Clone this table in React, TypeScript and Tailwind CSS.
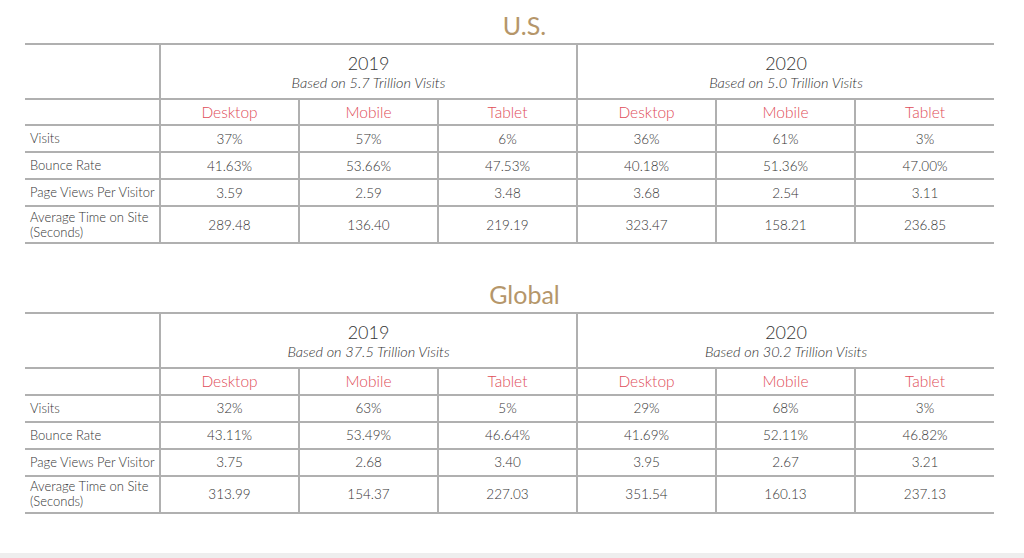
import React from "react"

interface Period {
  year: string
  basis: string
  values: string[][] // rows x [desktop, mobile, tablet]
}

interface Region {
  title: string
  periods: Period[]
}

const rowLabels = ["Visits", "Bounce Rate", "Page Views Per Visitor", "Average Time on Site\n(Seconds)"]
const devices = ["Desktop", "Mobile", "Tablet"]

const regions: Region[] = [
  {
    title: "U.S.",
    periods: [
      {
        year: "2019",
        basis: "Based on 5.7 Trillion Visits",
        values: [
          ["37%", "57%", "6%"],
          ["41.63%", "53.66%", "47.53%"],
          ["3.59", "2.59", "3.48"],
          ["289.48", "136.40", "219.19"],
        ],
      },
      {
        year: "2020",
        basis: "Based on 5.0 Trillion Visits",
        values: [
          ["36%", "61%", "3%"],
          ["40.18%", "51.36%", "47.00%"],
          ["3.68", "2.54", "3.11"],
          ["323.47", "158.21", "236.85"],
        ],
      },
    ],
  },
  {
    title: "Global",
    periods: [
      {
        year: "2019",
        basis: "Based on 37.5 Trillion Visits",
        values: [
          ["32%", "63%", "5%"],
          ["43.11%", "53.49%", "46.64%"],
          ["3.75", "2.68", "3.40"],
          ["313.99", "154.37", "227.03"],
        ],
      },
      {
        year: "2020",
        basis: "Based on 30.2 Trillion Visits",
        values: [
          ["29%", "68%", "3%"],
          ["41.69%", "52.11%", "46.82%"],
          ["3.95", "2.67", "3.21"],
          ["351.54", "160.13", "237.13"],
        ],
      },
    ],
  },
]

function StatsTable({ region }: { region: Region }) {
  return (
    <div>
      <h2 className="h-[43px] flex items-center justify-center text-[25px] leading-none font-normal text-[#b5966a] pt-[7px]">
        {region.title}
      </h2>
      <table className="w-[969px] border-collapse table-fixed text-[#333333] font-light">
        <colgroup>
          <col className="w-[135px]" />
          {[0, 1, 2, 3, 4, 5].map((i) => (
            <col key={i} className="w-[139px]" />
          ))}
        </colgroup>
        <thead>
          <tr className="h-[55px] border-t-2 border-[#b0b0b0]">
            <th className="border-b-2 border-[#b0b0b0]" />
            {region.periods.map((p) => (
              <th key={p.year} colSpan={3} className="border-l-2 border-b-2 border-[#b0b0b0] font-light align-bottom pb-[6px]">
                <div className="text-[18px] leading-[20px]">{p.year}</div>
                <div className="text-[14.5px] leading-[19px] italic">{p.basis}</div>
              </th>
            ))}
          </tr>
          <tr className="h-[26px] border-b-2 border-[#b0b0b0]">
            <th />
            {region.periods.map((p) =>
              devices.map((d) => (
                <th key={p.year + d} className="border-l-2 border-[#b0b0b0] font-light text-[15.5px] text-[#e04c58] pt-[1px]">
                  {d}
                </th>
              ))
            )}
          </tr>
        </thead>
        <tbody>
          {rowLabels.map((label, r) => (
            <tr key={label} className={`border-b-2 border-[#b0b0b0] ${r === 3 ? "h-[37px]" : "h-[27px]"}`}>
              <td className="pl-[5px] text-[13px] leading-[15px] whitespace-pre-line">{label}</td>
              {region.periods.map((p) =>
                p.values[r].map((v, c) => (
                  <td key={p.year + c} className="border-l-2 border-[#b0b0b0] text-center text-[13.5px]">
                    {v}
                  </td>
                ))
              )}
            </tr>
          ))}
        </tbody>
      </table>
    </div>
  )
}

export default function App() {
  return (
    <div className="w-[1024px] h-[558px] bg-white flex flex-col font-['Lato','Liberation_Sans',sans-serif] overflow-hidden">
      <div className="flex-1 pl-[25px] flex flex-col gap-[25px]">
        {regions.map((r) => (
          <StatsTable key={r.title} region={r} />
        ))}
      </div>
      <div className="h-[5px] bg-[#eeeeee]" />
    </div>
  )
}
